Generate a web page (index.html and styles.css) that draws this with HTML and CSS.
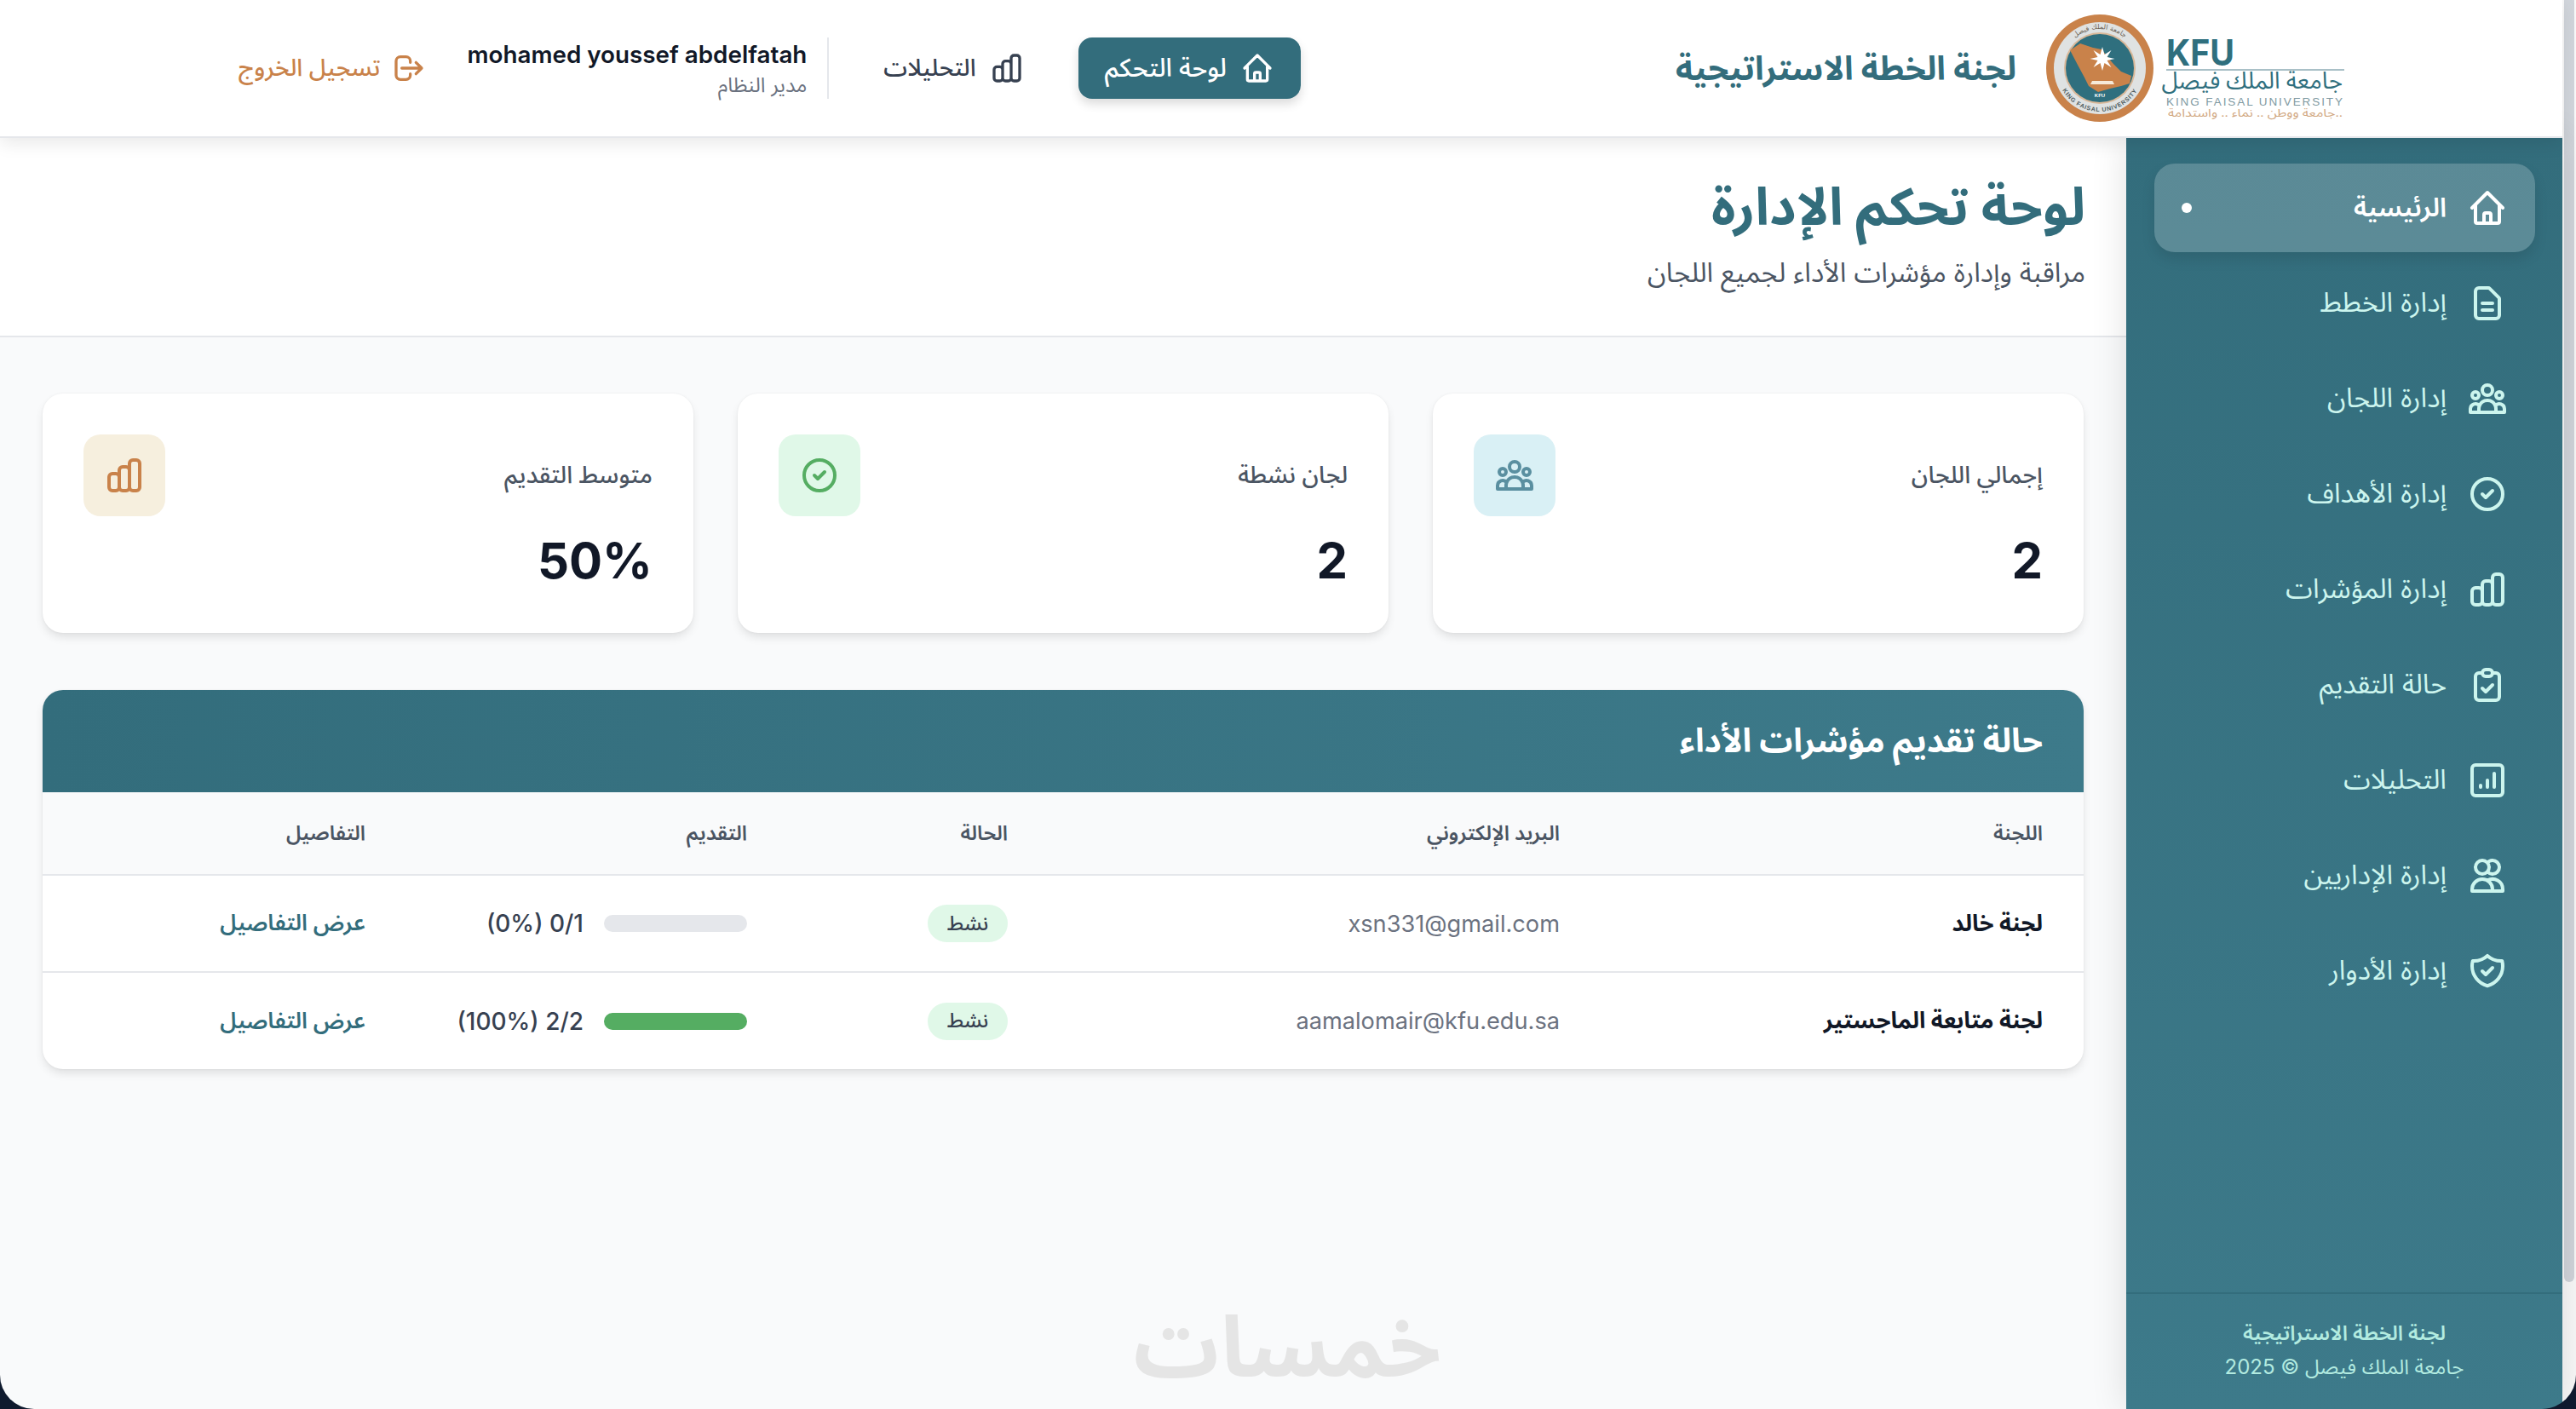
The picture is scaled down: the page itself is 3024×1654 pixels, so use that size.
FILE: index.html
```html
<!DOCTYPE html>
<html lang="ar" dir="rtl">
<head>
<meta charset="utf-8">
<title>لوحة تحكم الإدارة</title>
<link rel="stylesheet" href="styles.css">
</head>
<body>
<div class="app">
  <div class="scroll-track"><div class="scroll-thumb"></div></div>
  <div class="window">
    <header class="topbar">
      <div class="brand">
        <svg class="logo" viewBox="0 0 352 126" aria-label="KFU">
          <defs>
            <path id="seal-top" d="M19 63a46 46 0 0 1 92 0"/>
            <path id="seal-bottom" d="M14 63a51 51 0 0 0 102 0"/>
          </defs>
          <circle cx="65" cy="63" r="63" fill="#c9824a"/>
          <circle cx="65" cy="63" r="54" fill="#dfe2e2"/>
          <circle cx="65" cy="63" r="42" fill="#d9b899"/>
          <circle cx="65" cy="63" r="40" fill="#2f6f7e"/>
          <text class="seal-text"><textPath href="#seal-top" startOffset="50%" text-anchor="middle">جامعة الملك فيصل</textPath></text>
          <text class="seal-text seal-text-en"><textPath href="#seal-bottom" startOffset="50%" text-anchor="middle">KING FAISAL UNIVERSITY</textPath></text>
          <path d="M30 42l12-8 15 5 10 2 13 16 10 10 12 5-2 9-10 3-13 3-14 4-11-7-5-10-7-13z" fill="#c9824a"/>
          <path d="M68 38l2.500 9 8-5-5 8 9 2-9 2 5 8-8-5-2.500 9-2.500-9-8 5 5-8-9-2 9-2-5-8 8 5z" fill="#fff"/>
          <path d="M56 78h24l2 4H54z" fill="#f6ead9"/>
          <text class="seal-kfu" x="65" y="97" text-anchor="middle">KFU</text>
          <text class="logo-kfu" x="143" y="60" textLength="80" lengthAdjust="spacingAndGlyphs">KFU</text>
          <rect x="143" y="64" width="209" height="2" fill="#a9c0c7"/>
          <text class="logo-ar" x="350" y="87" text-anchor="end">جامعة الملك فيصل</text>
          <text class="logo-en" x="143" y="107" textLength="207">KING FAISAL UNIVERSITY</text>
          <text class="logo-tag" x="145" y="120" textLength="205" lengthAdjust="spacingAndGlyphs">جامعة ووطن .. نماء .. واستدامة..</text>
        </svg>
        <h1 class="brand-title">لجنة الخطة الاستراتيجية</h1>
      </div>
      <div class="top-actions">
        <a class="top-btn top-btn-active">
          <svg class="ico ico-40" viewBox="0 0 24 24"><path d="M3 12l2-2m0 0l7-7 7 7M5 10v10a1 1 0 001 1h3m10-11l2 2m-2-2v10a1 1 0 01-1 1h-3m-6 0a1 1 0 001-1v-4a1 1 0 011-1h2a1 1 0 011 1v4a1 1 0 001 1m-6 0h6"/></svg>
          <span>لوحة التحكم</span>
        </a>
        <a class="top-btn top-btn-plain">
          <svg class="ico ico-40" viewBox="0 0 24 24"><path d="M9 19v-6a2 2 0 00-2-2H5a2 2 0 00-2 2v6a2 2 0 002 2h2a2 2 0 002-2zm0 0V9a2 2 0 012-2h2a2 2 0 012 2v10m-6 0a2 2 0 002 2h2a2 2 0 002-2m0 0V5a2 2 0 012-2h2a2 2 0 012 2v14a2 2 0 01-2 2h-2a2 2 0 01-2-2z"/></svg>
          <span>التحليلات</span>
        </a>
        <div class="user">
          <div class="user-name">mohamed youssef abdelfatah</div>
          <div class="user-role">مدير النظام</div>
        </div>
        <a class="logout">
          <svg class="ico ico-40" viewBox="0 0 24 24"><path d="M17 16l4-4m0 0l-4-4m4 4H7m6 4v1a3 3 0 01-3 3H6a3 3 0 01-3-3V7a3 3 0 013-3h4a3 3 0 013 3v1"/></svg>
          <span>تسجيل الخروج</span>
        </a>
      </div>
    </header>
    <div class="body-row">
      <aside class="sidebar">
        <nav class="nav">
          <a class="nav-item nav-item-active">
            <svg class="ico ico-48" viewBox="0 0 24 24"><path d="M3 12l2-2m0 0l7-7 7 7M5 10v10a1 1 0 001 1h3m10-11l2 2m-2-2v10a1 1 0 01-1 1h-3m-6 0a1 1 0 001-1v-4a1 1 0 011-1h2a1 1 0 011 1v4a1 1 0 001 1m-6 0h6"/></svg>
            <span class="nav-label">الرئيسية</span>
            <span class="nav-dot"></span>
          </a>
          <a class="nav-item">
            <svg class="ico ico-48" viewBox="0 0 24 24"><path d="M9 12h6m-6 4h6m2 5H7a2 2 0 01-2-2V5a2 2 0 012-2h5.586a1 1 0 01.707.293l5.414 5.414a1 1 0 01.293.707V19a2 2 0 01-2 2z"/></svg>
            <span class="nav-label">إدارة الخطط</span>
          </a>
          <a class="nav-item">
            <svg class="ico ico-48" viewBox="0 0 24 24"><path d="M17 20h5v-2a3 3 0 00-5.356-1.857M17 20H7m10 0v-2c0-.656-.126-1.283-.356-1.857M7 20H2v-2a3 3 0 015.356-1.857M7 20v-2c0-.656.126-1.283.356-1.857m0 0a5.002 5.002 0 019.288 0M15 7a3 3 0 11-6 0 3 3 0 016 0zm6 3a2 2 0 11-4 0 2 2 0 014 0zM7 10a2 2 0 11-4 0 2 2 0 014 0z"/></svg>
            <span class="nav-label">إدارة اللجان</span>
          </a>
          <a class="nav-item">
            <svg class="ico ico-48" viewBox="0 0 24 24"><path d="M9 12l2 2 4-4m6 2a9 9 0 11-18 0 9 9 0 0118 0z"/></svg>
            <span class="nav-label">إدارة الأهداف</span>
          </a>
          <a class="nav-item">
            <svg class="ico ico-48" viewBox="0 0 24 24"><path d="M9 19v-6a2 2 0 00-2-2H5a2 2 0 00-2 2v6a2 2 0 002 2h2a2 2 0 002-2zm0 0V9a2 2 0 012-2h2a2 2 0 012 2v10m-6 0a2 2 0 002 2h2a2 2 0 002-2m0 0V5a2 2 0 012-2h2a2 2 0 012 2v14a2 2 0 01-2 2h-2a2 2 0 01-2-2z"/></svg>
            <span class="nav-label">إدارة المؤشرات</span>
          </a>
          <a class="nav-item">
            <svg class="ico ico-48" viewBox="0 0 24 24"><path d="M9 5H7a2 2 0 00-2 2v12a2 2 0 002 2h10a2 2 0 002-2V7a2 2 0 00-2-2h-2M9 5a2 2 0 002 2h2a2 2 0 002-2M9 5a2 2 0 012-2h2a2 2 0 012 2m-6 9l2 2 4-4"/></svg>
            <span class="nav-label">حالة التقديم</span>
          </a>
          <a class="nav-item">
            <svg class="ico ico-48" viewBox="0 0 24 24"><rect x="3" y="3" width="18" height="18" rx="2"/><path d="M8 16v-1M12 16v-4M16 16V8"/></svg>
            <span class="nav-label">التحليلات</span>
          </a>
          <a class="nav-item">
            <svg class="ico ico-48" viewBox="0 0 24 24"><path d="M12 4.354a4 4 0 110 5.292M15 21H3v-1a6 6 0 0112 0v1zm0 0h6v-1a6 6 0 00-9-5.197M13 7a4 4 0 11-8 0 4 4 0 018 0z"/></svg>
            <span class="nav-label">إدارة الإداريين</span>
          </a>
          <a class="nav-item">
            <svg class="ico ico-48" viewBox="0 0 24 24"><path d="M9 12l2 2 4-4m5.618-4.016A11.955 11.955 0 0112 2.944a11.955 11.955 0 01-8.618 3.04A12.02 12.02 0 003 9c0 5.591 3.824 10.29 9 11.622 5.176-1.332 9-6.03 9-11.622 0-1.042-.133-2.052-.382-3.016z"/></svg>
            <span class="nav-label">إدارة الأدوار</span>
          </a>
        </nav>
        <div class="side-footer">
          <div class="side-footer-title">لجنة الخطة الاستراتيجية</div>
          <div class="side-footer-sub">جامعة الملك فيصل © 2025</div>
        </div>
      </aside>
      <main class="main">
        <section class="page-head">
          <h2 class="page-title">لوحة تحكم الإدارة</h2>
          <p class="page-sub">مراقبة وإدارة مؤشرات الأداء لجميع اللجان</p>
        </section>
        <section class="content">
          <div class="stats">
            <article class="stat">
              <div class="stat-top">
                <span class="stat-label">إجمالي اللجان</span>
                <span class="stat-icon stat-icon-cyan"><svg class="ico ico-48" viewBox="0 0 24 24"><path d="M17 20h5v-2a3 3 0 00-5.356-1.857M17 20H7m10 0v-2c0-.656-.126-1.283-.356-1.857M7 20H2v-2a3 3 0 015.356-1.857M7 20v-2c0-.656.126-1.283.356-1.857m0 0a5.002 5.002 0 019.288 0M15 7a3 3 0 11-6 0 3 3 0 016 0zm6 3a2 2 0 11-4 0 2 2 0 014 0zM7 10a2 2 0 11-4 0 2 2 0 014 0z"/></svg></span>
              </div>
              <div class="stat-value">2</div>
            </article>
            <article class="stat">
              <div class="stat-top">
                <span class="stat-label">لجان نشطة</span>
                <span class="stat-icon stat-icon-green"><svg class="ico ico-48" viewBox="0 0 24 24"><path d="M9 12l2 2 4-4m6 2a9 9 0 11-18 0 9 9 0 0118 0z"/></svg></span>
              </div>
              <div class="stat-value">2</div>
            </article>
            <article class="stat">
              <div class="stat-top">
                <span class="stat-label">متوسط التقديم</span>
                <span class="stat-icon stat-icon-orange"><svg class="ico ico-48" viewBox="0 0 24 24"><path d="M9 19v-6a2 2 0 00-2-2H5a2 2 0 00-2 2v6a2 2 0 002 2h2a2 2 0 002-2zm0 0V9a2 2 0 012-2h2a2 2 0 012 2v10m-6 0a2 2 0 002 2h2a2 2 0 002-2m0 0V5a2 2 0 012-2h2a2 2 0 012 2v14a2 2 0 01-2 2h-2a2 2 0 01-2-2z"/></svg></span>
              </div>
              <div class="stat-value">50%</div>
            </article>
          </div>
          <section class="panel">
            <h3 class="panel-head">حالة تقديم مؤشرات الأداء</h3>
            <table class="table">
              <thead>
                <tr>
                  <th class="col-name">اللجنة</th>
                  <th class="col-mail">البريد الإلكتروني</th>
                  <th class="col-status">الحالة</th>
                  <th class="col-progress">التقديم</th>
                  <th class="col-details">التفاصيل</th>
                </tr>
              </thead>
              <tbody>
                <tr>
                  <td class="cell-name">لجنة خالد</td>
                  <td class="cell-mail">xsn331@gmail.com</td>
                  <td><span class="badge">نشط</span></td>
                  <td>
                    <div class="progress">
                      <div class="bar"></div>
                      <span class="progress-text" dir="ltr">(0%) 0/1</span>
                    </div>
                  </td>
                  <td><a class="details">عرض التفاصيل</a></td>
                </tr>
                <tr>
                  <td class="cell-name">لجنة متابعة الماجستير</td>
                  <td class="cell-mail">aamalomair@kfu.edu.sa</td>
                  <td><span class="badge">نشط</span></td>
                  <td>
                    <div class="progress">
                      <div class="bar"><div class="bar-fill" style="width:100%"></div></div>
                      <span class="progress-text" dir="ltr">(100%) 2/2</span>
                    </div>
                  </td>
                  <td><a class="details">عرض التفاصيل</a></td>
                </tr>
              </tbody>
            </table>
          </section>
        </section>
        <div class="watermark">خمسات</div>
      </main>
    </div>
  </div>
</div>
<div class="corners"></div>
</body>
</html>
```
FILE: styles.css
```css
* { box-sizing: border-box; }
html, body { margin: 0; height: 100%; overflow: hidden; }
body {
  font-family: Inter, "Noto Sans Arabic", "DejaVu Sans", sans-serif;
  background: #f9fafb;
  color: #111827;
}
h1, h2, h3, p { margin: 0; }
.app { display: flex; height: 1654px; width: 3024px; }
.scroll-track { width: 16px; flex: none; background: #f9f9f9; padding: 0 2px; }
.scroll-thumb { height: 1505px; width: 12px; background: #d1d5db; border-radius: 0 0 6px 6px; }
.window { flex: 1; display: flex; flex-direction: column; min-width: 0; position: relative; }

.ico { fill: none; stroke: currentColor; stroke-width: 2; stroke-linecap: round; stroke-linejoin: round; flex: none; display: block; }
.ico-40 { width: 40px; height: 40px; }
.ico-48 { width: 48px; height: 48px; }

.topbar {
  height: 162px; flex: none; background: #fff; border-bottom: 2px solid #e5e7eb;
  display: flex; align-items: center; justify-content: space-between;
  padding: 0 256px 0 280px; position: relative; z-index: 3;
  box-shadow: 0 6px 20px rgba(0,0,0,.09);
}
.brand { display: flex; align-items: center; gap: 33px; }
.logo { width: 352px; height: 126px; display: block; direction: ltr; overflow: visible; }
.seal-text { font: 400 8px "DejaVu Sans", sans-serif; fill: #6b5f52; }
.seal-text-en { font: 700 7px "Liberation Sans", sans-serif; letter-spacing: .8px; fill: #4d5a5e; }
.seal-kfu { font: 700 6px "Liberation Sans", sans-serif; fill: #fff; }
.logo-kfu { font: 700 42px Inter, sans-serif; fill: #2f6f7e; }
.logo-ar { font: 400 27.500px "Noto Sans Arabic", "DejaVu Sans", sans-serif; fill: #2f6f7e; }
.logo-en { font: 400 13.500px "Liberation Sans", sans-serif; fill: #7f9aa2; }
.logo-tag { font: 400 13px "Noto Sans Arabic", "DejaVu Sans", sans-serif; fill: #d1a77f; }
.brand-title { font-size: 39px; font-weight: 700; color: #336d7c; line-height: 56px; white-space: nowrap; }

.top-actions { display: flex; align-items: center; }
.top-btn {
  height: 72px; display: flex; align-items: center; padding: 0 31px;
  border-radius: 16px; font-size: 28px; font-weight: 500; white-space: nowrap; margin-left: 32px;
}
.top-btn-active { background: #336d7c; color: #fff; font-size: 30px; gap: 16px; box-shadow: 0 6px 12px rgba(0,0,0,.14); }
.top-btn-plain { color: #374151; gap: 16px; padding: 0 32px; }
.user {
  height: 72px; border-right: 2px solid #e5e7eb; padding: 1px 24px 0 0; margin-left: 48px;
  display: flex; flex-direction: column;
}
.user-name { font-size: 27.800px; font-weight: 600; color: #111827; line-height: 38px; white-space: nowrap; }
.user-role { font-size: 24px; color: #6b7280; line-height: 34px; }
.logout { display: flex; align-items: center; gap: 14px; font-size: 28px; font-weight: 500; color: #c9824a; white-space: nowrap; }

.body-row { flex: 1; display: flex; min-height: 0; }
.sidebar {
  width: 512px; flex: none; display: flex; flex-direction: column; position: relative; z-index: 2;
  background: linear-gradient(180deg, #336d7c, #3d7a8a);
  box-shadow: 0 0 40px rgba(0,0,0,.12);
}
.nav { flex: 1; display: flex; flex-direction: column; gap: 8px; padding: 30px 32px 0 33px; }
.nav-item {
  height: 104px; display: flex; align-items: center; gap: 24px; padding: 0 32px;
  border-radius: 24px; font-size: 32px; color: #ccf5ee;
}
.nav-label { flex: 1; white-space: nowrap; }
.nav-item-active {
  background: rgba(255,255,255,.2); color: #fff; font-size: 31px; font-weight: 600;
  box-shadow: 0 8px 16px rgba(0,0,0,.1);
}
.nav-dot { width: 12px; height: 12px; border-radius: 50%; background: #fff; }
.side-footer {
  height: 137px; flex: none; border-top: 2px solid #336d7c; padding-top: 26px;
  text-align: center; color: #b2ebe0; font-size: 24px;
}
.side-footer-title { font-weight: 600; line-height: 40px; }
.side-footer-sub { line-height: 40px; }

.main { flex: 1; min-width: 0; display: flex; flex-direction: column; position: relative; }
.page-head {
  height: 234px; flex: none; background: #fff; border-bottom: 2px solid #e5e7eb;
  padding: 40px 48px 0;
}
.page-title { font-size: 61px; font-weight: 700; color: #336d7c; line-height: 80px; }
.page-sub { font-size: 32px; color: #4b5563; line-height: 48px; margin-top: 14px; }
.content { padding: 66px 50px 0; flex: 1; }
.stats { display: flex; gap: 52px; }
.stat {
  flex: 1; height: 281px; background: #fff; border-radius: 24px; padding: 48px;
  box-shadow: 0 6px 12px -2px rgba(0,0,0,.12), 0 0 3px rgba(0,0,0,.05);
}
.stat-top { display: flex; align-items: center; justify-content: space-between; }
.stat-label { font-size: 28px; font-weight: 500; color: #4b5563; }
.stat-icon { width: 96px; height: 96px; border-radius: 20px; display: flex; align-items: center; justify-content: center; }
.stat-icon-cyan { background: #d9f0f5; color: #5a8fa0; }
.stat-icon-green { background: #e0f8e8; color: #55ad62; }
.stat-icon-orange { background: #f6efde; color: #c9824a; }
.stat-value { font-size: 58px; font-weight: 700; line-height: 72px; margin-top: 16px; color: #111827; }

.panel {
  margin-top: 67px; background: #fff; border-radius: 24px; overflow: hidden;
  box-shadow: 0 6px 12px -2px rgba(0,0,0,.12), 0 0 3px rgba(0,0,0,.05);
}
.panel-head {
  height: 120px; display: flex; align-items: center; padding: 0 48px;
  font-size: 39px; font-weight: 700; color: #fff;
  background: linear-gradient(270deg, #3d7a8a, #336d7c);
}
.table { width: 100%; border-collapse: collapse; table-layout: fixed; }
.table th {
  height: 97px; background: #f9fafb; border-bottom: 2px solid #e5e7eb;
  font-size: 24px; font-weight: 600; color: #4b5563; text-align: right; padding: 0 48px;
}
.table td { height: 114px; padding: 0 48px; font-size: 28px; border-bottom: 2px solid #e5e7eb; }
.table tbody tr:last-child td { border-bottom: 0; }
.col-name { width: 567px; }
.col-mail { width: 648px; }
.col-status { width: 306px; }
.col-progress { width: 448px; }
.col-details { width: 427px; }
.table .cell-name { font-weight: 700; font-size: 27px; color: #111827; }
.table .cell-mail { font-size: 27.200px; color: #6b7280; }
.badge {
  display: inline-flex; align-items: center; justify-content: center; width: 94px; height: 44px;
  border-radius: 22px; background: #e0f8e8; color: #374151; font-size: 24px; font-weight: 500;
}
.progress { display: flex; align-items: center; gap: 24px; }
.bar { width: 168px; height: 20px; border-radius: 10px; background: #e5e7eb; overflow: hidden; flex: none; }
.bar-fill { height: 100%; background: #55ad62; }
.progress-text { font-size: 28px; font-weight: 500; color: #374151; white-space: nowrap; }
.details { font-size: 26.500px; font-weight: 600; color: #336d7c; white-space: nowrap; }

.watermark {
  position: absolute; left: 1330px; top: 1363px; width: 362px; text-align: center;
  font-size: 100px; font-weight: 700; line-height: 110px; color: #e5e5e5; white-space: nowrap;
}
.corners {
  position: fixed; inset: 0; border-radius: 0 0 40px 40px; pointer-events: none; z-index: 9;
  box-shadow: 0 0 0 60px #0f1a2e;
}
```
